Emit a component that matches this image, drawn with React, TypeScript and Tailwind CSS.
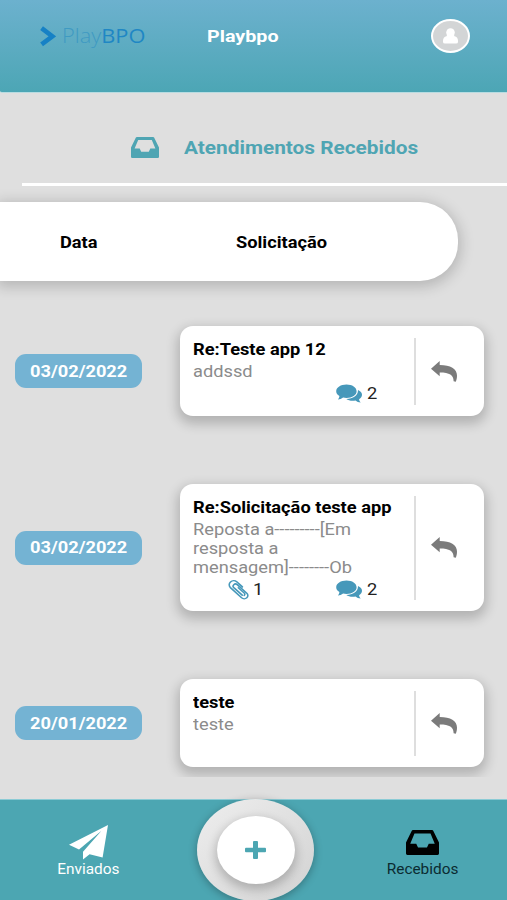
import type { ReactNode } from "react";

type IconProps = { className: string };

function InboxIcon({ className }: IconProps) {
  return (
    <svg className={className} viewBox="0 0 28 21" preserveAspectRatio="none" fill="currentColor">
      <path
        fillRule="evenodd"
        d="M5.9 0H22.1Q22.8 0 23.1 .6L28 10.5V19.8Q28 21 26.8 21H1.2Q0 21 0 19.8V10.5L4.9 .6Q5.2 0 5.9 0ZM7.2 2.9L3.6 11.6H8.7L10.2 14.8H17.8L19.3 11.6H24.4L20.8 2.9Z"
      />
    </svg>
  );
}

function ReplyIcon({ className }: IconProps) {
  return (
    <svg className={className} viewBox="0 0 26 21" preserveAspectRatio="none" fill="currentColor">
      <path d="M0 7.8L8.7 0V3.9C19.5 3.9 26 7.6 26 14.6C26 17 25.6 19 24.8 20.8L22.6 20.2C22.6 14.2 18.6 11.6 8.7 11.6V15.2Z" />
    </svg>
  );
}

function CommentsIcon({ className }: IconProps) {
  return (
    <svg className={className} viewBox="0 0 26 19" preserveAspectRatio="none" fill="currentColor">
      <path d="M10.5 0.5C16.2 0.5 20.6 3.4 20.6 7.3S16.2 14 10.5 14C9.3 14 8.2 13.9 7.1 13.6C5.6 14.8 3.8 15.5 1.8 15.6C2.8 14.6 3.3 13.5 3.4 12C1.4 10.8 0.2 9.1 0.2 7.2C0.2 3.4 4.8 0.5 10.5 0.5Z" />
      <path d="M22 6C24.5 7 26 8.8 26 10.8C26 12.6 24.9 14.2 23.1 15.2C23.2 16.6 23.8 17.5 24.7 18.5C22.6 18.3 20.9 17.6 19.5 16.4C15.8 17.1 12.4 16.4 10.3 14.9C17 14.9 22.2 11.5 22 6Z" />
    </svg>
  );
}

function PaperclipIcon({ className }: IconProps) {
  return (
    <svg
      className={className}
      viewBox="0 0 21 21"
      preserveAspectRatio="none"
      fill="none"
      stroke="currentColor"
      strokeWidth="1.6"
      strokeLinecap="round"
      strokeLinejoin="round"
    >
      <path d="M14.4 7.2L8.8 1.9C7 .4 4.2.5 2.5 2.1S.8 6.3 2.4 8L13.6 18.7C15 20 17.4 20 18.8 18.7S20.2 15.3 18.8 13.9L9.2 4.9C8.2 4 6.7 4 5.8 4.9S4.9 7.1 5.8 8L14.2 15.9" />
      <path d="M16.2 16.2C17.2 15.3 16.9 14.4 16.2 13.7L10.3 8.2" />
    </svg>
  );
}

function PlaneIcon({ className }: IconProps) {
  return (
    <svg className={className} viewBox="0 0 39 35" preserveAspectRatio="none" fill="currentColor">
      <path d="M39 0L0 19.8L10 24.6L32.5 5.8L14 26.7V34.6L20.6 29.2L33.6 32.6Z" />
    </svg>
  );
}

function Wide({ className, children }: { className: string; children: ReactNode }) {
  return <span className={`block whitespace-nowrap ${className}`}>{children}</span>;
}

type Ticket = {
  date: string;
  title: string;
  lines: string[];
  clips?: number;
  comments?: number;
  box: string;
};

const tickets: Ticket[] = [
  { date: "03/02/2022", title: "Re:Teste app 12", lines: ["addssd"], comments: 2, box: "h-[90px]" },
  {
    date: "03/02/2022",
    title: "Re:Solicitação teste app",
    lines: ["Reposta a---------[Em", "resposta a", "mensagem]--------Ob"],
    clips: 1,
    comments: 2,
    box: "h-[127px]",
  },
  { date: "20/01/2022", title: "teste", lines: ["teste"], box: "h-[88px]" },
];

function TicketRow({ t }: { t: Ticket }) {
  return (
    <div className="flex items-center pl-[15px]">
      <div className="flex h-[34px] w-[127px] shrink-0 items-center justify-center rounded-[11px] bg-[#74b3d3] pt-px text-white">
        <Wide className="scale-x-[1.14] text-base font-bold">{t.date}</Wide>
      </div>
      <div className={`ml-[38px] flex w-[304px] shrink-0 items-center rounded-[13px] bg-white shadow-[0_5px_12px_3px_rgba(0,0,0,0.2)] ${t.box}`}>
        <div className="flex h-full w-[234px] flex-col pl-[13px] pt-3">
          <Wide className="h-6 origin-left scale-x-[1.14] text-base font-bold leading-6 text-black">{t.title}</Wide>
          {t.lines.map((line) => (
            <Wide key={line} className="origin-left scale-x-[1.14] text-base leading-[19px] text-[#8b8b8b]">
              {line}
            </Wide>
          ))}
          {t.comments && (
            <div className="flex h-[25px] items-center text-[#4698ba]">
              <div className="flex w-[143px] items-center gap-1 pl-[35px]">
                {t.clips && (
                  <>
                    <PaperclipIcon className="h-5 w-[21px]" />
                    <Wide className="origin-left scale-x-[1.14] text-base text-[#222]">{t.clips}</Wide>
                  </>
                )}
              </div>
              <CommentsIcon className="h-[19px] w-[26px]" />
              <Wide className="ml-[5px] origin-left scale-x-[1.14] text-base text-[#222]">{t.comments}</Wide>
            </div>
          )}
        </div>
        <div className="h-[calc(100%-23px)] w-[2px] bg-[#dedede]" />
        <ReplyIcon className="ml-[15px] h-[21px] w-[26px] text-[#7b7b7b]" />
      </div>
    </div>
  );
}

export default function App() {
  return (
    <div className="flex h-[900px] w-[507px] flex-col overflow-hidden bg-[#dfdfdf] font-['Roboto',sans-serif]">
      <header className="flex h-[93px] shrink-0 items-start rounded-bl-[2px] border-b border-[#b9dce1] bg-linear-to-b from-[#6cb1ce] to-[#4ca6b5]">
        <div className="flex h-[72px] w-full items-center">
          <svg className="ml-10 h-[21px] w-4 shrink-0" viewBox="0 0 16 21" fill="none" stroke="#1681c5" strokeWidth="4.6">
            <path d="M1.6 2.2L12.4 10.3L1.6 18.4" />
          </svg>
          <div className="-mt-px ml-[6px] w-[145px] shrink-0">
            <Wide className="origin-left scale-x-[1.09] font-['Open_Sans',sans-serif] text-xl font-light text-[#3f9ac2]">
              Play<span className="font-normal text-[#1f87c4]">BPO</span>
            </Wide>
          </div>
          <div className="w-[224px] shrink-0 pt-0.5">
            <Wide className="origin-left scale-x-[1.16] text-[17px] font-bold text-white">Playbpo</Wide>
          </div>
          <div className="flex h-[34px] w-[39px] items-center justify-center rounded-[50%] border-2 border-white bg-[#d3d5d6]">
            <svg className="h-4 w-[15px]" viewBox="0 0 15 16" fill="white" preserveAspectRatio="none">
              <ellipse cx="7.5" cy="4.6" rx="4.3" ry="4.4" />
              <path d="M4 7H11L11.5 8.2Q15 9 15 13V14Q15 15.6 13 15.6H2Q0 15.6 0 14V13Q0 9 3.5 8.2Z" />
            </svg>
          </div>
        </div>
      </header>

      <div className="ml-[22px] flex h-[93px] shrink-0 items-center border-b-[3px] border-white pt-[18px]">
        <InboxIcon className="ml-[109px] h-[21px] w-7 text-[#4fa5b3]" />
        <Wide className="ml-[25px] mt-px origin-left scale-x-[1.155] text-lg font-bold text-[#4fa5b3]">
          Atendimentos Recebidos
        </Wide>
      </div>

      <div className="mt-4 flex h-[79px] w-[458px] shrink-0 items-center rounded-r-[38px] bg-white pl-[60px] pt-0.5 text-black shadow-[0_3px_14px_3px_rgba(0,0,0,0.18)]">
        <div className="w-44">
          <Wide className="origin-left scale-x-[1.14] text-base font-bold">Data</Wide>
        </div>
        <Wide className="origin-left scale-x-[1.14] text-base font-bold">Solicitação</Wide>
      </div>

      <main className="mt-[5px] flex h-[491px] shrink-0 flex-col gap-[68px] overflow-hidden pt-10">
        {tickets.map((t, i) => (
          <TicketRow key={i} t={t} />
        ))}
      </main>

      <nav className="mt-[22px] flex h-[102px] shrink-0 items-start border-t border-[#8bcbd5] bg-[#4ca6b2]">
        <div className="flex w-[197px] flex-col items-center pr-5 pt-[25px] text-white">
          <PlaneIcon className="h-[35px] w-[39px]" />
          <Wide className="scale-x-[1.1] text-sm leading-[18px]">Enviados</Wide>
        </div>
        <div className="-mt-px flex h-[102px] w-[117px] items-center justify-center rounded-[50%] bg-linear-to-br from-[#eeeeee] to-[#d2d2d2] shadow-[0_2px_8px_rgba(0,0,0,0.3)]">
          <div className="flex h-[68px] w-[78px] items-center justify-center rounded-[50%] bg-white shadow-[0_4px_10px_2px_rgba(0,0,0,0.2)]">
            <svg className="h-[18px] w-[21px]" viewBox="0 0 21 18" fill="#4ca6b2">
              <rect x="0" y="6.7" width="21" height="4.6" rx="1" />
              <rect x="8" y="0" width="5" height="18" rx="1" />
            </svg>
          </div>
        </div>
        <div className="flex flex-1 flex-col items-center pl-6 pt-[30px] text-black">
          <InboxIcon className="h-[25px] w-[33px]" />
          <Wide className="mt-[5px] scale-x-[1.1] text-sm leading-[18px] text-[#0b2b31]">Recebidos</Wide>
        </div>
      </nav>
    </div>
  );
}
